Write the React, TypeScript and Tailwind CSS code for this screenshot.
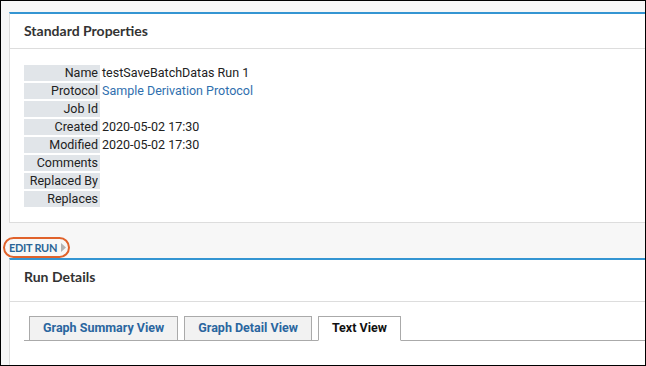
const rows: { label: string; value?: string; link?: boolean }[] = [
    { label: 'Name', value: 'testSaveBatchDatas Run 1' },
    { label: 'Protocol', value: 'Sample Derivation Protocol', link: true },
    { label: 'Job Id' },
    { label: 'Created', value: '2020-05-02 17:30' },
    { label: 'Modified', value: '2020-05-02 17:30' },
    { label: 'Comments' },
    { label: 'Replaced By' },
    { label: 'Replaces' },
];

const tabs = ['Graph Summary View', 'Graph Detail View', 'Text View'];

function PanelHeader({ title, tall }: { title: string; tall?: boolean }) {
    return (
        <div
            className={`border-b border-[#dddddd] pl-[14px] pt-[9px] font-['Lato',sans-serif] text-[14px] font-bold leading-[16px] text-[#333333] ${
                tall ? 'h-[42px]' : 'h-[35px]'
            }`}
        >
            {title}
        </div>
    );
}

export default function App() {
    return (
        <div className="flex h-[366px] w-[646px] flex-col overflow-hidden border border-black bg-[#f7f7f7] pl-[8px] pt-[11px] font-['Roboto',sans-serif]">
            {/* Standard Properties */}
            <div className="border-l border-t-2 border-b border-[#dddddd] border-t-[#3495d2] bg-white">
                <PanelHeader title="Standard Properties" />
                <div className="pb-[15px] pl-[14px] pt-[16px]">
                    <div className="flex flex-col gap-[2px]">
                        {rows.map((r) => (
                            <div key={r.label} className="flex h-[16px] items-center text-[12.5px] leading-[16px]">
                                <div className="h-full w-[76px] bg-[#e1e5e9] pr-[2px] text-right text-[#222222]">{r.label}</div>
                                <div className={`pl-[2px] ${r.link ? 'text-[#2f6fae]' : 'text-[#222222]'}`}>{r.value}</div>
                            </div>
                        ))}
                    </div>
                </div>
            </div>

            {/* Edit run link */}
            <div className="relative flex h-[35px] items-end pb-[5px]">
                <div className="flex items-center gap-[4px] font-['Lato',sans-serif] text-[11px] font-bold leading-none tracking-[-0.3px] text-[#2a6496]">
                    EDIT RUN
                    <svg width="5" height="9" viewBox="0 0 5 9" className="shrink-0">
                        <polygon points="0,0 5,4.5 0,9" fill="#b3b3b3" />
                    </svg>
                </div>
                <div className="absolute left-[-6px] top-[14px] h-[21px] w-[67px] rounded-full border-2 border-[#e0622b]" />
            </div>

            {/* Run Details */}
            <div className="flex-1 border-l border-t-2 border-[#dddddd] border-t-[#3495d2] bg-white">
                <PanelHeader title="Run Details" tall />
                <div className="pl-[14px] pt-[14px]">
                    <div className="flex h-[25px] items-end gap-[6px] border-b border-[#aaaaaa] pl-[5px]">
                        {tabs.map((t, i) => {
                            const active = i === tabs.length - 1;
                            return (
                                <div
                                    key={t}
                                    className={`-mb-px flex h-[25px] items-center border border-[#aaaaaa] px-[13px] text-[12.5px] font-bold ${
                                        active
                                            ? 'border-b-white bg-white text-[#111111]'
                                            : 'bg-[#f2f2f2] text-[#2a669f]'
                                    }`}
                                >
                                    {t}
                                </div>
                            );
                        })}
                    </div>
                </div>
            </div>
        </div>
    );
}
